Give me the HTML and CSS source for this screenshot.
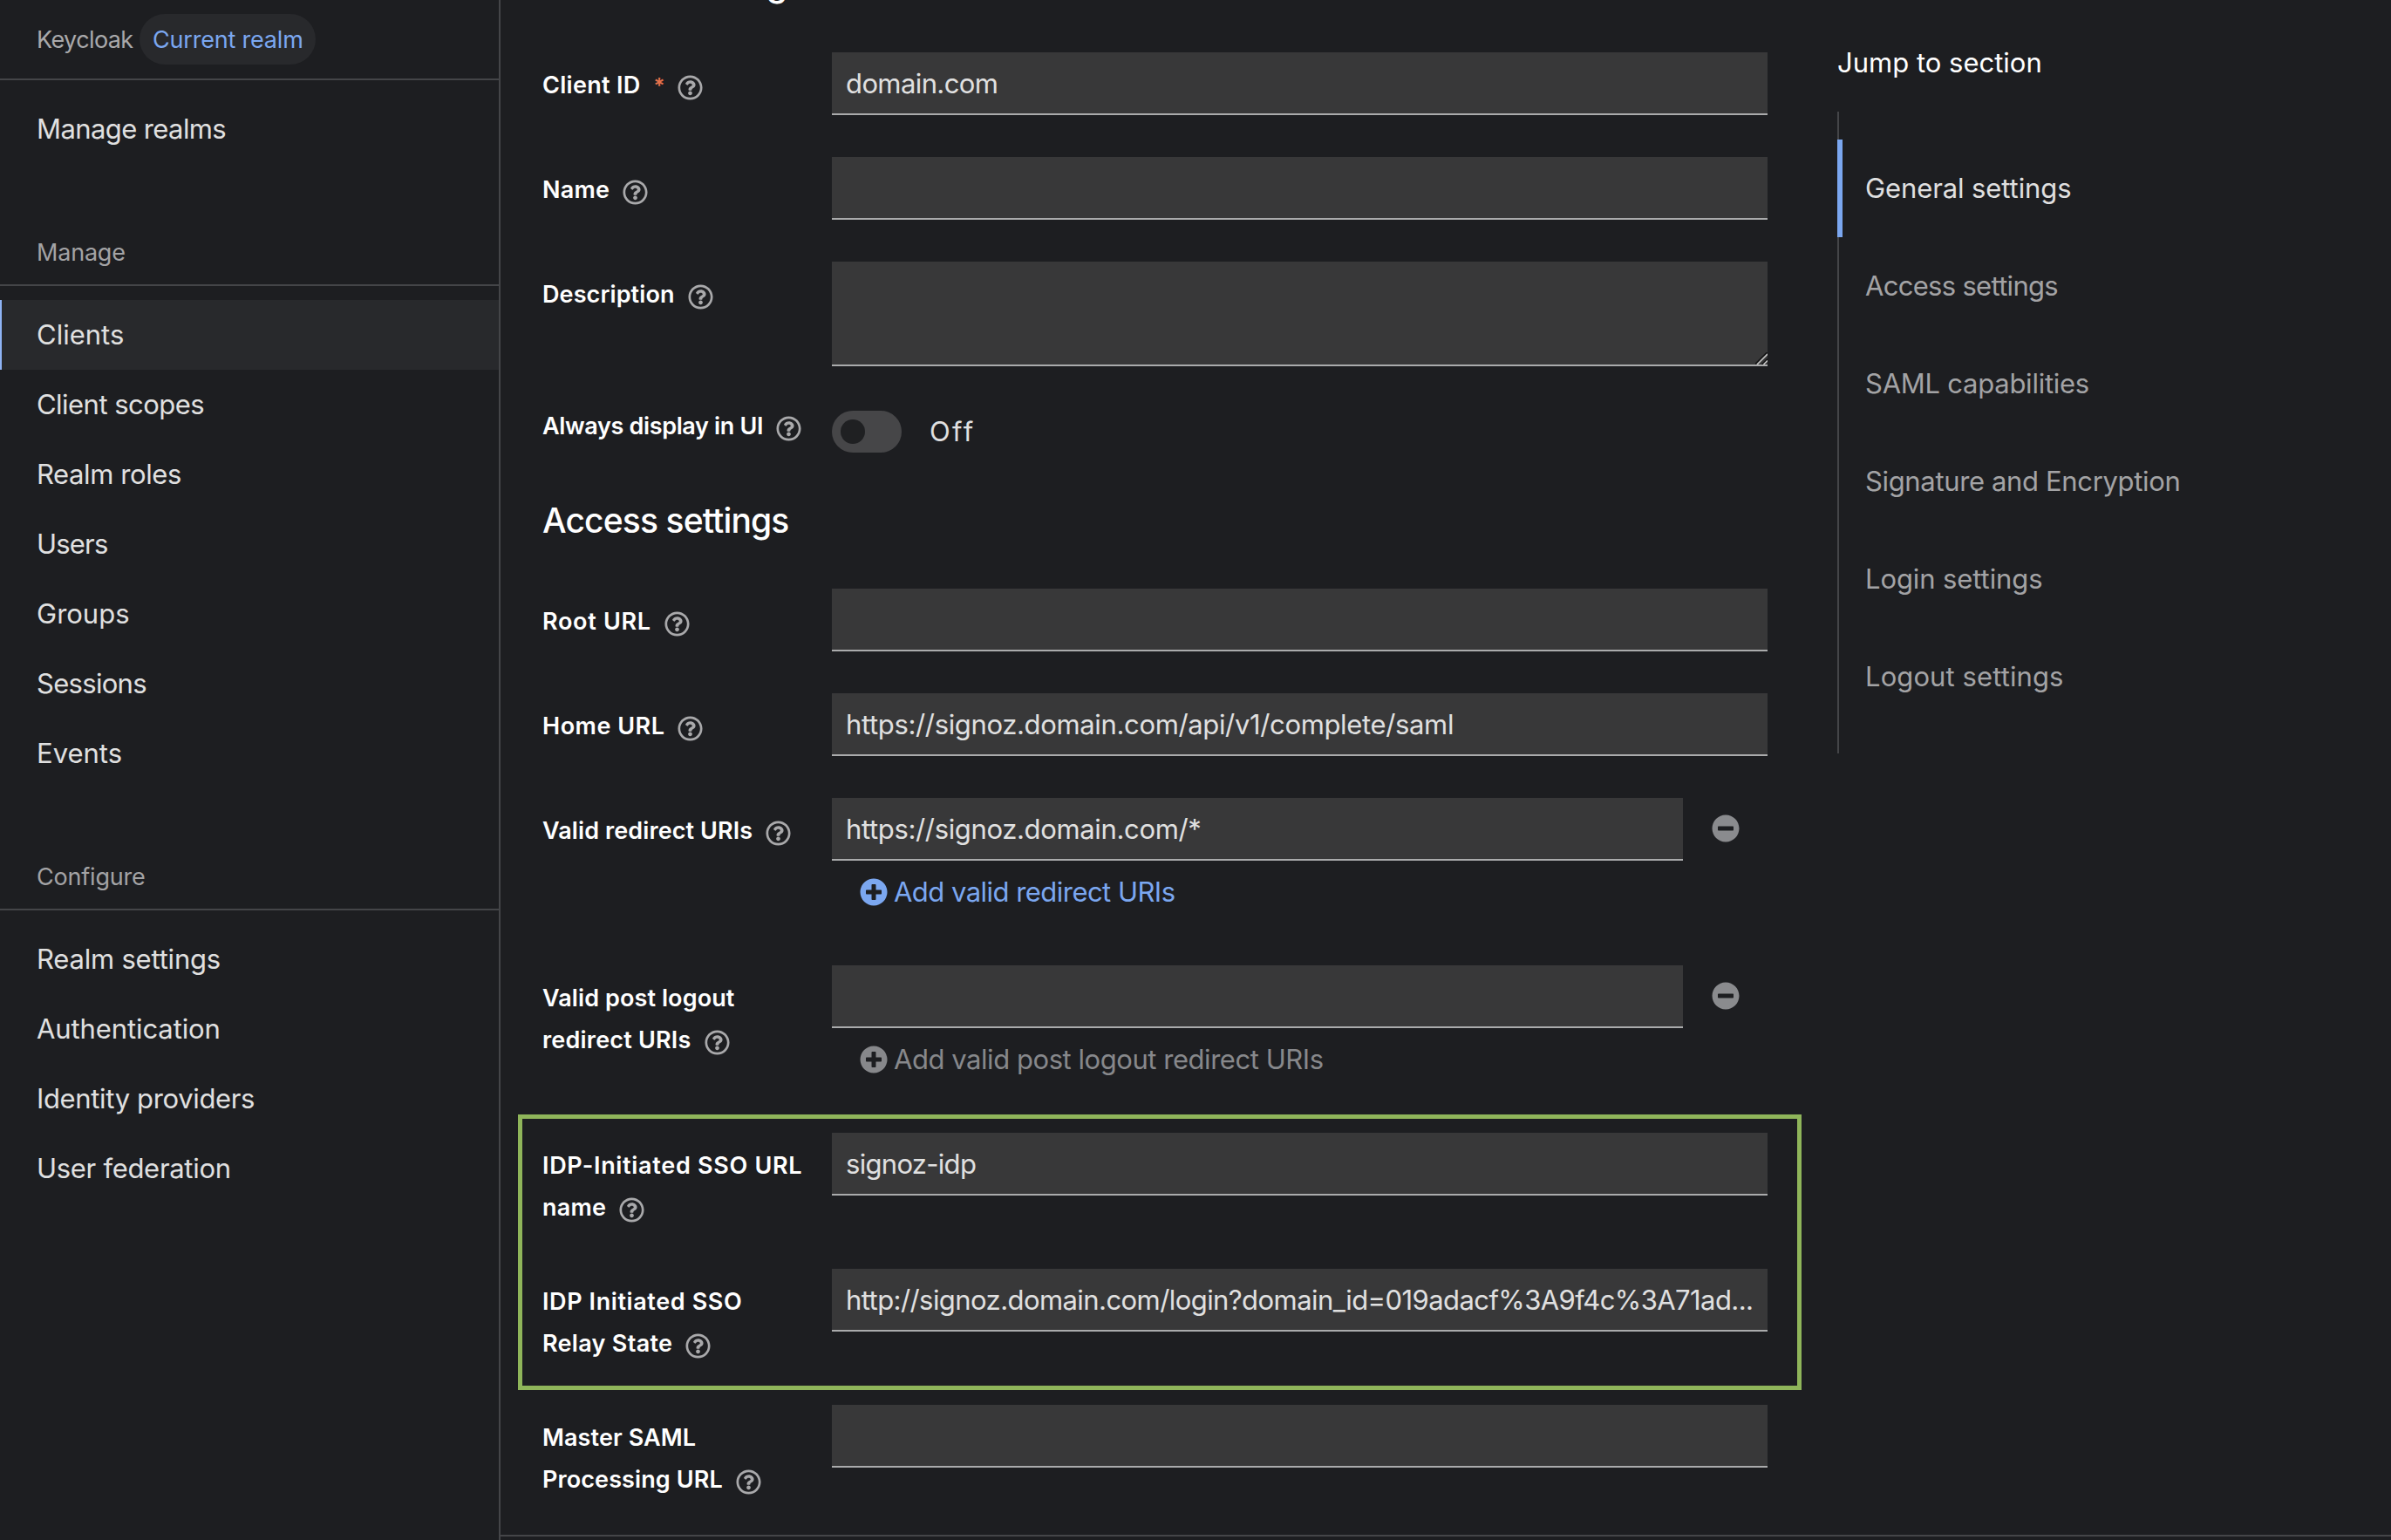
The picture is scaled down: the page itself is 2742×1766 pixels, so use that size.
FILE: index.html
```html
<!DOCTYPE html>
<html lang="en">
<head>
<meta charset="utf-8">
<title>Client details</title>
<link rel="stylesheet" href="styles.css">
</head>
<body>
<svg class="sprite" aria-hidden="true">
  <symbol id="help" viewBox="0 0 512 512"><path d="M256 8C119.043 8 8 119.083 8 256c0 136.997 111.043 248 248 248s248-111.003 248-248C504 119.083 392.957 8 256 8zm0 448c-110.532 0-200-89.431-200-200 0-110.495 89.472-200 200-200 110.491 0 200 89.471 200 200 0 110.53-89.431 200-200 200zm107.244-255.2c0 67.052-72.421 68.084-72.421 92.863V300c0 6.627-5.373 12-12 12h-45.647c-6.627 0-12-5.373-12-12v-8.659c0-35.745 27.1-50.034 47.579-61.516 17.561-9.845 28.324-16.541 28.324-29.579 0-17.246-21.999-28.693-39.784-28.693-23.189 0-33.894 10.977-48.942 29.969-4.057 5.12-11.46 6.071-16.666 2.124l-27.824-21.098c-5.107-3.872-6.251-11.066-2.644-16.363C184.846 131.491 214.94 112 261.794 112c49.071 0 101.45 38.304 101.45 88.8zM298 368c0 23.159-18.841 42-42 42s-42-18.841-42-42 18.841-42 42-42 42 18.841 42 42z"/></symbol>
  <symbol id="plus" viewBox="0 0 512 512"><path d="M256 8C119 8 8 119 8 256s111 248 248 248 248-111 248-248S393 8 256 8zm144 276c0 6.6-5.4 12-12 12h-92v92c0 6.6-5.4 12-12 12h-56c-6.6 0-12-5.4-12-12v-92h-92c-6.6 0-12-5.4-12-12v-56c0-6.6 5.4-12 12-12h92v-92c0-6.6 5.4-12 12-12h56c6.6 0 12 5.4 12 12v92h92c6.6 0 12 5.4 12 12v56z"/></symbol>
  <symbol id="minus" viewBox="0 0 512 512"><path d="M256 8C119 8 8 119 8 256s111 248 248 248 248-111 248-248S393 8 256 8zM124 296c-6.6 0-12-5.4-12-12v-56c0-6.6 5.4-12 12-12h264c6.6 0 12 5.4 12 12v56c0 6.6-5.4 12-12 12H124z"/></symbol>
</svg>
<div class="page">
  <nav class="sidebar">
    <div class="realm"><span class="realm-name n6">Keycloak</span><span class="pill n2">Current realm</span></div>
    <a class="nav-item first n6">Manage realms</a>
    <h2 class="nav-title n2">Manage</h2>
    <a class="nav-item active">Clients</a>
    <a class="nav-item n5">Client scopes</a>
    <a class="nav-item n4">Realm roles</a>
    <a class="nav-item n8">Users</a>
    <a class="nav-item">Groups</a>
    <a class="nav-item n7">Sessions</a>
    <a class="nav-item">Events</a>
    <h2 class="nav-title n2">Configure</h2>
    <a class="nav-item n2">Realm settings</a>
    <a class="nav-item n1">Authentication</a>
    <a class="nav-item n35">Identity providers</a>
    <a class="nav-item n3">User federation</a>
  </nav>
  <main class="main">
    <div class="content">
      <form class="form">
        <h1 class="heading n1">General settings</h1>
        <div class="row">
          <label class="label"><span class="p3">Client ID</span><span class="required">*</span><svg class="help"><use href="#help"/></svg></label>
          <div class="input n6">domain.com</div>
        </div>
        <div class="row">
          <label class="label"><span class="p2">Name</span><svg class="help"><use href="#help"/></svg></label>
          <div class="input"></div>
        </div>
        <div class="row">
          <label class="label"><span class="p1">Description</span><svg class="help"><use href="#help"/></svg></label>
          <div class="input textarea"><svg class="grip" viewBox="0 0 14 14"><path class="grip-dark" d="M0 13.5 13.5 0M7.5 14 14 7.5"/><path class="grip-light" d="M2 14 14 2M9.5 14 14 9.5"/></svg></div>
        </div>
        <div class="row toggle-row">
          <label class="label"><span class="n35">Always display in UI</span><svg class="help"><use href="#help"/></svg></label>
          <div class="toggle"><span class="switch"></span><span class="off">Off</span></div>
        </div>
        <h1 class="heading n9">Access settings</h1>
        <div class="row">
          <label class="label"><span class="p7">Root URL</span><svg class="help"><use href="#help"/></svg></label>
          <div class="input"></div>
        </div>
        <div class="row">
          <label class="label"><span class="p5">Home URL</span><svg class="help"><use href="#help"/></svg></label>
          <div class="input n35">https://signoz.domain.com/api/v1/complete/saml</div>
        </div>
        <div class="row">
          <label class="label"><span class="p1">Valid redirect URIs</span><svg class="help"><use href="#help"/></svg></label>
          <div class="multi">
            <div class="multi-line"><div class="input n35">https://signoz.domain.com/*</div><span class="remove"><svg class="icon"><use href="#minus"/></svg></span></div>
            <a class="add n5"><svg class="icon"><use href="#plus"/></svg>Add valid redirect URIs</a>
          </div>
        </div>
        <div class="row">
          <label class="label"><span class="p1">Valid post logout</span><br><span class="p2">redirect URIs</span><svg class="help"><use href="#help"/></svg></label>
          <div class="multi">
            <div class="multi-line"><div class="input"></div><span class="remove"><svg class="icon"><use href="#minus"/></svg></span></div>
            <a class="add disabled n45"><svg class="icon"><use href="#plus"/></svg>Add valid post logout redirect URIs</a>
          </div>
        </div>
        <div class="highlighted">
          <div class="row">
            <label class="label"><span class="p7">IDP-Initiated SSO URL</span><br><span class="p2">name</span><svg class="help"><use href="#help"/></svg></label>
            <div class="input n7">signoz-idp</div>
          </div>
          <div class="row">
            <label class="label"><span class="p6">IDP Initiated SSO</span><br><span class="p3">Relay State</span><svg class="help"><use href="#help"/></svg></label>
            <div class="input n55">http://signoz.domain.com/login?domain_id=019adacf%3A9f4c%3A71ad...</div>
          </div>
          <div class="outline"></div>
        </div>
        <div class="row">
          <label class="label"><span class="p1">Master SAML</span><br><span class="p1">Processing URL</span><svg class="help"><use href="#help"/></svg></label>
          <div class="input"></div>
        </div>
      </form>
      <aside class="jump">
        <div class="jump-title">Jump to section</div>
        <ul class="jump-list">
          <li class="jump-item current n1">General settings</li>
          <li class="jump-item n7">Access settings</li>
          <li class="jump-item n25">SAML capabilities</li>
          <li class="jump-item n35">Signature and Encryption</li>
          <li class="jump-item n1">Login settings</li>
          <li class="jump-item p1">Logout settings</li>
        </ul>
      </aside>
    </div>
  </main>
</div>
</body>
</html>
```
FILE: styles.css
```css
* { box-sizing: border-box; }
body {
  margin: 0;
  background: #1d1e21;
  color: #e0e0e0;
  font: 400 31px/48px Inter, "Liberation Sans", sans-serif;
}
.sprite { display: none; }
svg { fill: currentColor; }
.page { display: flex; height: 1766px; overflow: hidden; }

/* Tracking steps */
.n9 { letter-spacing: -0.87px; }
.n8 { letter-spacing: -0.8px; }
.n7 { letter-spacing: -0.7px; }
.n6 { letter-spacing: -0.6px; }
.n55 { letter-spacing: -0.57px; }
.n5 { letter-spacing: -0.53px; }
.n45 { letter-spacing: -0.45px; }
.n4 { letter-spacing: -0.4px; }
.n35 { letter-spacing: -0.35px; }
.n3 { letter-spacing: -0.3px; }
.n25 { letter-spacing: -0.25px; }
.n2 { letter-spacing: -0.2px; }
.n1 { letter-spacing: -0.1px; }
.p1 { letter-spacing: 0.1px; }
.p2 { letter-spacing: 0.2px; }
.p3 { letter-spacing: 0.3px; }
.p5 { letter-spacing: 0.5px; }
.p6 { letter-spacing: 0.6px; }
.p7 { letter-spacing: 0.7px; }

/* Sidebar */
.sidebar {
  display: flex;
  flex-direction: column;
  width: 574px;
  flex: none;
  border-right: 2px solid #444548;
}
.realm {
  display: flex;
  align-items: center;
  height: 92px;
  padding-left: 42px;
  border-bottom: 2px solid #444548;
  font-size: 27px;
}
.realm-name { width: 118px; padding-top: 1px; color: #a9a9ab; }
.pill {
  height: 58px;
  padding: 1px 14px 0 15px;
  border-radius: 29px;
  background: #28292c;
  color: #7ba7f0;
  line-height: 58px;
}
.nav-item {
  height: 80px;
  padding-left: 42px;
  line-height: 80px;
}
.nav-item.first { margin-top: 16px; }
.nav-item.active {
  background: #28292c;
  box-shadow: inset 2px 0 #8fb3f5;
}
.nav-title {
  height: 60px;
  margin: 80px 0 16px;
  padding: 1px 0 0 42px;
  border-bottom: 2px solid #444548;
  color: #a3a3a5;
  font-size: 27px;
  font-weight: 400;
  line-height: 42px;
}

/* Form */
.main { flex: 1; }
.content {
  display: flex;
  gap: 80px;
  height: 1762px;
  padding-left: 48px;
  border-bottom: 2px solid #444548;
}
.form {
  display: flex;
  flex-direction: column;
  gap: 48px;
  width: 1405px;
  margin-top: -44px;
}
.heading {
  margin: 0 0 4px;
  color: #fff;
  font-size: 39px;
  font-weight: 500;
  line-height: 52px;
}
.row {
  display: grid;
  grid-template-columns: 332px 1fr;
  align-items: start;
}
.label {
  margin-bottom: -2px;
  padding-top: 14px;
  color: #fff;
  font-size: 27px;
  font-weight: 600;
  white-space: nowrap;
}
.help {
  width: 29px;
  height: 29px;
  margin-left: 15px;
  vertical-align: -7.5px;
  color: #a9a9ab;
}
.required {
  display: inline-block;
  width: 12px;
  margin-left: 15px;
  color: #e4714b;
  font-size: 24px;
  line-height: 30px;
}
.input {
  height: 72px;
  padding: 1px 16px 0;
  border-bottom: 2px solid #aaabac;
  background: #383839;
  line-height: 70px;
  white-space: nowrap;
  overflow: hidden;
}
.textarea { position: relative; height: 120px; }
.grip {
  position: absolute;
  right: 0;
  bottom: 0;
  width: 14px;
  height: 14px;
  fill: none;
  stroke-width: 1.6;
}
.grip-dark { stroke: #151617; }
.grip-light { stroke: #c4c4c4; }
.toggle-row { height: 55px; }
.toggle-row .label { padding-top: 0; margin-top: -3px; }
.toggle { display: flex; align-items: center; gap: 32px; padding-top: 3px; }
.switch {
  display: flex;
  width: 80px;
  height: 48px;
  padding: 10px;
  border-radius: 24px;
  background: #464648;
}
.switch::before {
  content: "";
  width: 28px;
  height: 28px;
  border-radius: 50%;
  background: #1f2022;
}
.off { letter-spacing: 2.4px; }
.multi-line { display: flex; }
.multi-line .input { width: 976px; }
.remove {
  display: flex;
  align-items: center;
  justify-content: center;
  width: 97px;
  height: 70px;
  color: #8a8b8e;
}
.icon { width: 32px; height: 32px; }
.add {
  display: flex;
  align-items: center;
  gap: 7px;
  height: 72px;
  padding-left: 32px;
  color: #7ba7f0;
}
.add.disabled { color: #87888b; }
.highlighted {
  position: relative;
  display: flex;
  flex-direction: column;
  gap: 48px;
}
.outline {
  position: absolute;
  top: -21px;
  left: -28px;
  width: 1472px;
  height: 316px;
  border: 5px solid #8fb55a;
}

/* Section navigation */
.jump { padding-top: 48px; }
.jump-title { color: #fff; }
.jump-list {
  margin: 32px 0 0;
  padding: 32px 0;
  list-style: none;
  box-shadow: inset 2px 0 #444548;
}
.jump-item {
  height: 112px;
  padding-left: 32px;
  color: #a3a3a5;
  line-height: 112px;
  white-space: nowrap;
}
.jump-item.current {
  color: #e0e0e0;
  box-shadow: inset 6px 0 #7ba7f0;
}
```
